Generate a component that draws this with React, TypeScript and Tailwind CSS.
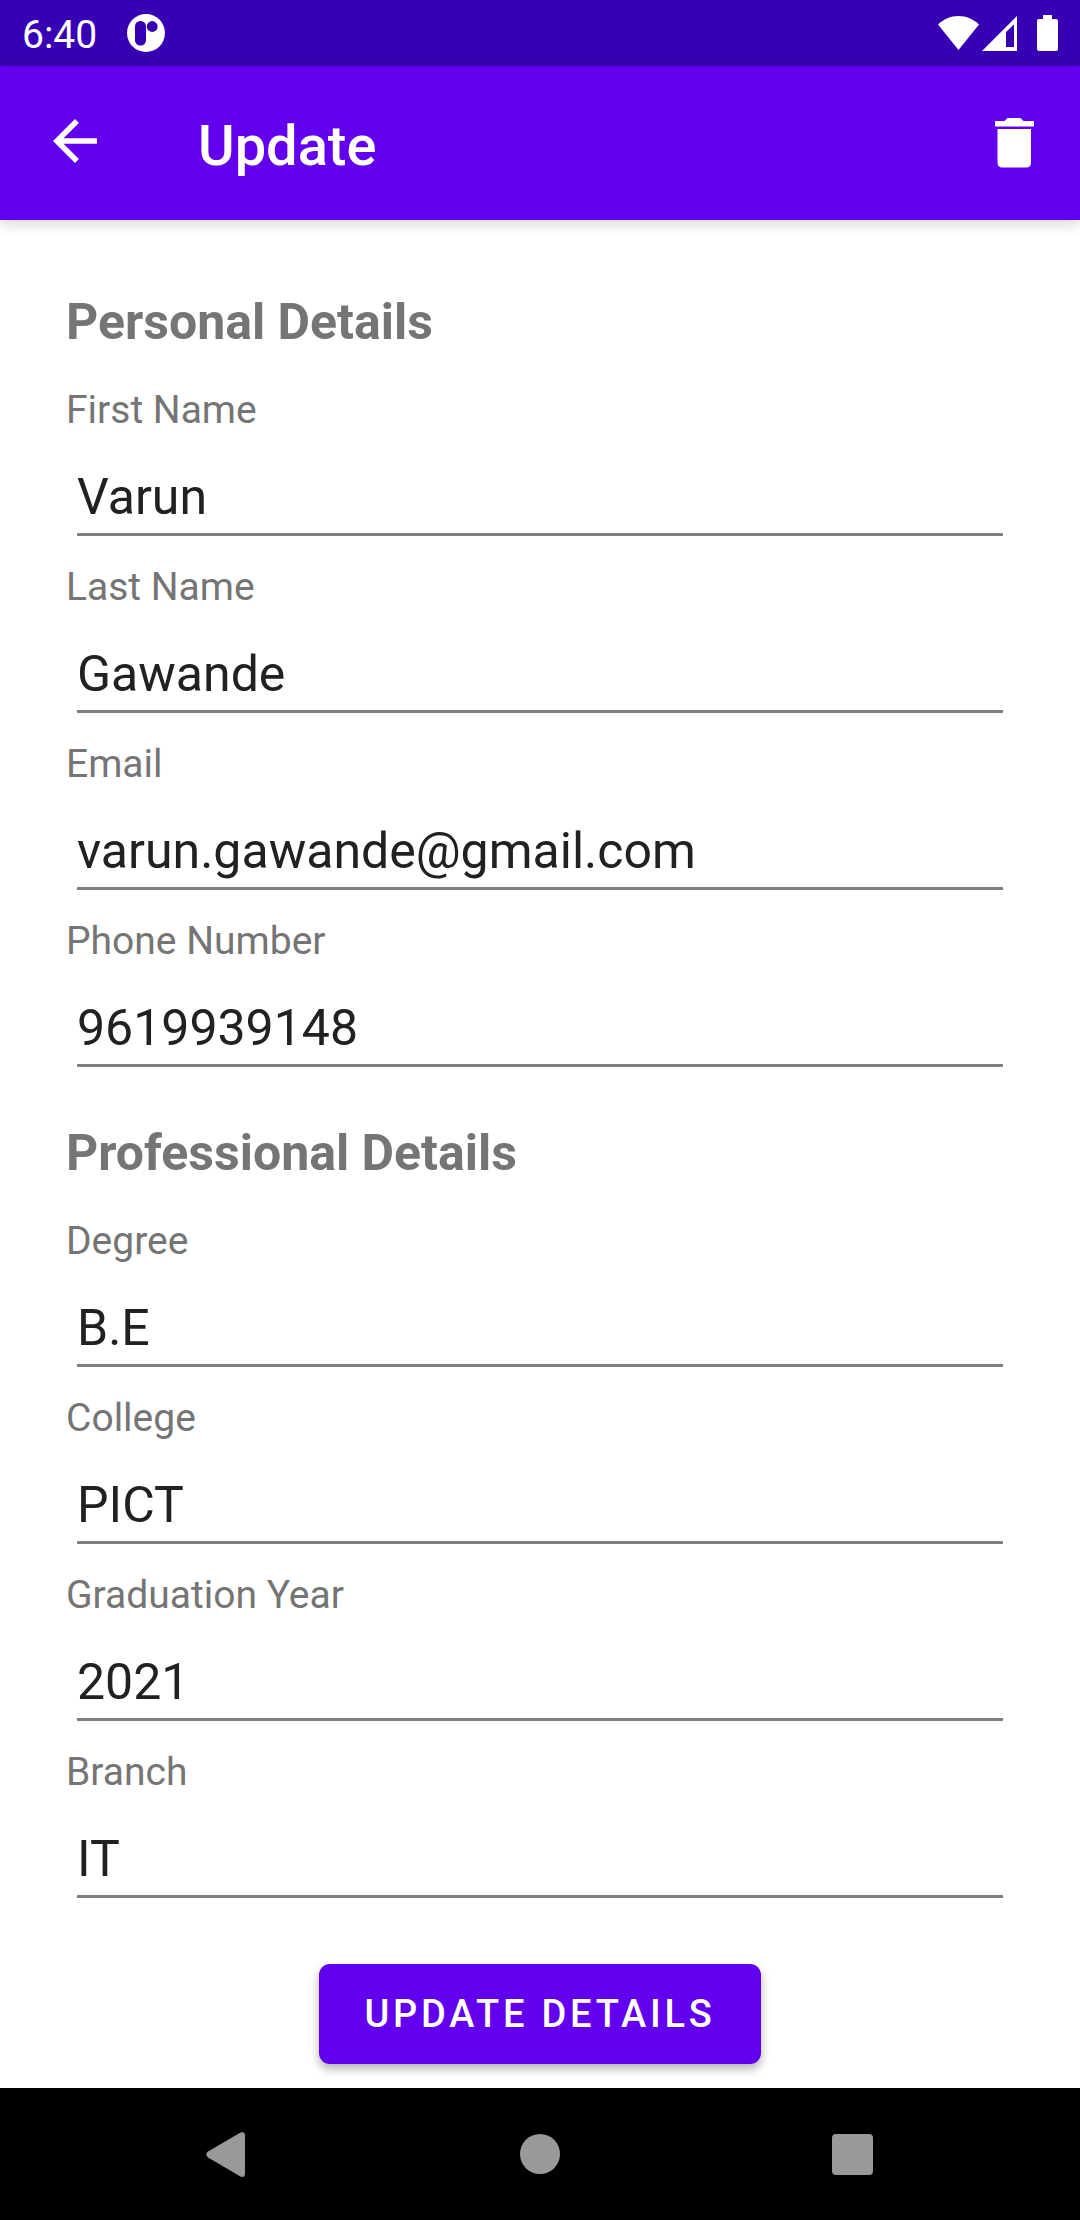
import { useId, useState } from "react";

type FieldData = { label: string; value: string; type?: string };

const personal: FieldData[] = [
  { label: "First Name", value: "Varun" },
  { label: "Last Name", value: "Gawande" },
  { label: "Email", value: "varun.gawande@gmail.com", type: "email" },
  { label: "Phone Number", value: "9619939148", type: "tel" },
];

const professional: FieldData[] = [
  { label: "Degree", value: "B.E" },
  { label: "College", value: "PICT" },
  { label: "Graduation Year", value: "2021" },
  { label: "Branch", value: "IT" },
];

function StatusBar() {
  return (
    <div className="flex h-[66px] shrink-0 items-center bg-[#3700b3] px-[22px] text-white">
      <span className="pt-[3px] text-[39px] leading-[48px]">6:40</span>
      <svg className="ml-[30px] h-[38px] w-[38px]" viewBox="0 0 38 38" aria-hidden="true">
        <circle cx="19" cy="19" r="19" fill="#fff" />
        <rect x="8" y="7" width="11" height="24.5" rx="5.2" fill="#3700b3" />
        <circle cx="25.2" cy="12.5" r="5.4" fill="#3700b3" />
      </svg>
      <svg className="ml-auto h-9 w-[41px]" viewBox="0 0 41 36" fill="#fff" aria-hidden="true">
        <path d="M0 9.6C5.5 4 12.700 1 20.500 1S35.500 4 41 9.600L20.500 35Z" />
      </svg>
      <svg className="ml-[3px] h-9 w-[35px]" viewBox="0 0 35 36" aria-hidden="true">
        <path fillRule="evenodd" fill="#fff" d="M35 1V36H0ZM32 9.500L24 17V32H32Z" />
      </svg>
      <svg className="ml-5 h-9 w-[21px]" viewBox="0 0 21 36" fill="#fff" aria-hidden="true">
        <path d="M6 0H15V4H19Q21 4 21 6V34Q21 36 19 36H2Q0 36 0 34V6Q0 4 2 4H6Z" />
      </svg>
    </div>
  );
}

function AppBar() {
  return (
    <header className="relative flex h-[154px] shrink-0 items-center bg-[#6200ee] px-8 text-white shadow-[0_4px_14px_rgba(0,0,0,0.16)]">
      <button type="button" aria-label="Back" className="px-[10px] pb-1">
        <svg className="h-[66px] w-[66px]" viewBox="0 0 24 24" fill="currentColor" aria-hidden="true">
          <path d="M20 11H7.830l5.590-5.590L12 4l-8 8 8 8 1.410-1.410L7.830 13H20v-2z" />
        </svg>
      </button>
      <h1 className="ml-20 pt-[6px] text-[56px] leading-[64px] font-medium">Update</h1>
      <button type="button" aria-label="Delete" className="ml-auto">
        <svg className="h-[66px] w-[66px]" viewBox="0 0 66 66" fill="currentColor" aria-hidden="true">
          <path d="M13 11H22.500L25.500 8H38.500L41.500 11H52V16.500H13Z" />
          <path d="M15.500 19H49V52.500Q49 57.500 44 57.500H20.500Q15.500 57.500 15.500 52.500Z" />
        </svg>
      </button>
    </header>
  );
}

function Field({ label, value, type = "text" }: FieldData) {
  const id = useId();
  const [text, setText] = useState(value);
  return (
    <div className="mb-[25px] flex flex-col">
      <label htmlFor={id} className="text-[39px] leading-[52px] text-[#757575]">
        {label}
      </label>
      <div className="flex px-[11px]">
        <input
          id={id}
          type={type}
          value={text}
          onChange={(e) => setText(e.target.value)}
          className="h-[100px] w-full min-w-0 border-b-[3px] border-[#7f7f7f] bg-transparent pt-[31px] pb-[6px] text-[50px] leading-[60px] text-[#212121] outline-none"
        />
      </div>
    </div>
  );
}

function Section({ title, fields }: { title: string; fields: FieldData[] }) {
  return (
    <section>
      <h2 className="mb-8 text-[50px] leading-[60px] font-bold text-[#757575]">{title}</h2>
      {fields.map((f) => (
        <Field key={f.label} {...f} />
      ))}
    </section>
  );
}

function NavBar() {
  return (
    <nav className="flex h-[132px] shrink-0 bg-black px-[72px] text-[#999999]">
      <button type="button" aria-label="Back" className="flex flex-1 items-center justify-center">
        <svg className="h-[66px] w-[66px]" viewBox="0 0 66 66" fill="currentColor" aria-hidden="true">
          <path d="M13 30.500L45.500 11.500Q50 10 50 14.500V52.500Q50 57 45.500 55.500L13 36.500Q9.500 33.500 13 30.500Z" />
        </svg>
      </button>
      <button type="button" aria-label="Home" className="flex flex-1 items-center justify-center">
        <span className="h-10 w-10 rounded-full bg-[#999999]" />
      </button>
      <button type="button" aria-label="Recent apps" className="flex flex-1 items-center justify-center">
        <span className="h-[41px] w-[41px] rounded bg-[#999999]" />
      </button>
    </nav>
  );
}

export default function App() {
  return (
    <div className="flex min-h-screen flex-col bg-white font-['Roboto',sans-serif]">
      <StatusBar />
      <AppBar />
      <main className="flex-1 px-[66px] pt-[72px] pb-6">
        <form onSubmit={(e) => e.preventDefault()} className="flex flex-col">
          <div className="flex flex-col gap-[31px]">
            <Section title="Personal Details" fields={personal} />
            <Section title="Professional Details" fields={professional} />
          </div>
          <button
            type="submit"
            className="mt-[41px] h-[100px] self-center rounded-[11px] bg-[#6200ee] px-[45px] text-[38px] leading-[48px] font-medium tracking-widest text-white uppercase shadow-[0_5px_10px_rgba(0,0,0,0.3)]"
          >
            Update Details
          </button>
        </form>
      </main>
      <NavBar />
    </div>
  );
}
